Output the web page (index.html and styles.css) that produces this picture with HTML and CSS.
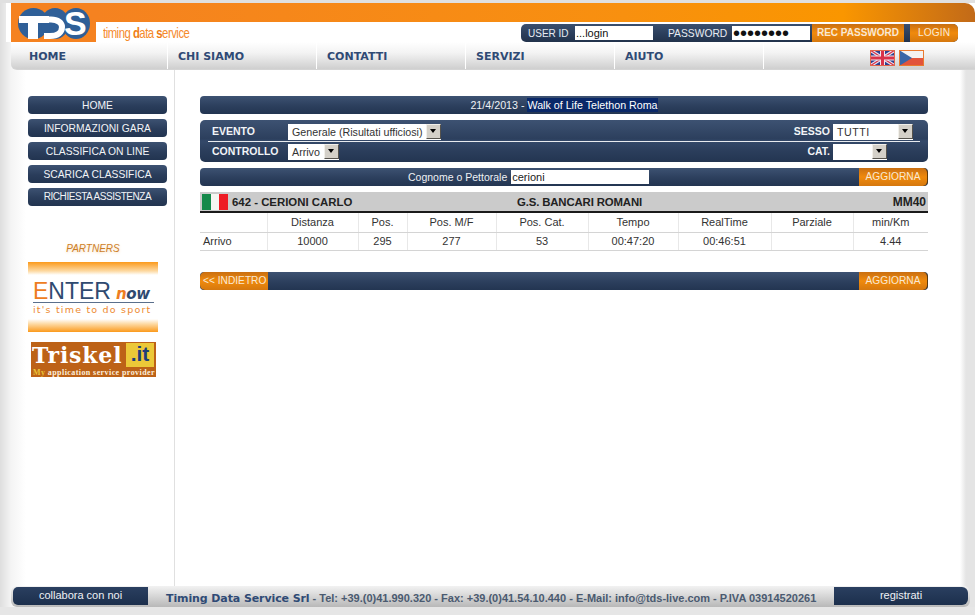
FILE: index.html
```html
<!DOCTYPE html>
<html lang="it">
<head>
<meta charset="utf-8">
<title>Timing Data Service</title>
<link rel="stylesheet" href="styles.css">
</head>
<body>
<div class="page">
  <header class="header">
    <div class="logo">
      <svg width="85" height="39" viewBox="0 0 85 39">
        <circle cx="22.500" cy="20.500" r="15.500" fill="#2f5f97"/>
        <ellipse cx="44" cy="20.500" rx="14" ry="15.500" fill="#2f5f97"/>
        <ellipse cx="65" cy="20.500" rx="14" ry="15.500" fill="#2f5f97"/>
        <rect x="8" y="13" width="30" height="7" fill="#fff"/>
        <rect x="17" y="13" width="10" height="23" fill="#fff"/>
        <path d="M31 16.500H40C47 16.500 51 20 51 24C51 29 47 33 39 33H33" fill="none" stroke="#fff" stroke-width="6"/>
        <text class="logo-s" x="53" y="32">S</text>
      </svg>
    </div>
    <div class="header-main">
      <div class="orange-bar"></div>
      <div class="header-row">
        <div class="tagline">timing <b>d</b>ata <b>s</b>ervice</div>
        <form class="login">
          <label class="login-label login-user">USER ID</label>
          <input class="login-input login-id" type="text" value="...login">
          <label class="login-label login-pass">PASSWORD</label>
          <input class="login-input login-pw" type="password" value="password">
          <span class="btn-orange btn-rec">REC PASSWORD</span>
          <span class="btn-orange btn-login">LOGIN</span>
        </form>
      </div>
    </div>
  </header>

  <nav class="nav">
    <a class="nav-item">HOME</a>
    <a class="nav-item">CHI SIAMO</a>
    <a class="nav-item">CONTATTI</a>
    <a class="nav-item">SERVIZI</a>
    <a class="nav-item">AIUTO</a>
    <div class="nav-flags">
      <svg class="flag" viewBox="0 0 25 16" width="25" height="16">
        <rect width="25" height="16" fill="#2c3f8f"/>
        <path d="M0 0L25 16M25 0L0 16" stroke="#e8e4f0" stroke-width="3.500"/>
        <path d="M0 0L25 16M25 0L0 16" stroke="#d8324a" stroke-width="1.200"/>
        <path d="M12.500 0V16M0 8H25" stroke="#f0e8ee" stroke-width="5"/>
        <path d="M12.500 0V16M0 8H25" stroke="#d8324a" stroke-width="3"/>
        <rect x=".5" y=".5" width="24" height="15" fill="none" stroke="#e0674c"/>
      </svg>
      <svg class="flag flag-cz" viewBox="0 0 25 16" width="25" height="16">
        <rect width="25" height="8" fill="#f4f2f2"/>
        <rect y="8" width="25" height="8" fill="#e2543c"/>
        <path d="M0 0L13 8L0 16z" fill="#3a66a8"/>
        <rect x=".5" y=".5" width="24" height="15" fill="none" stroke="#ea7a30"/>
      </svg>
    </div>
  </nav>

  <div class="body">
    <aside class="sidebar">
      <ul class="side-menu">
        <li class="side-btn">HOME</li>
        <li class="side-btn">INFORMAZIONI GARA</li>
        <li class="side-btn">CLASSIFICA ON LINE</li>
        <li class="side-btn">SCARICA CLASSIFICA</li>
        <li class="side-btn side-btn-last">RICHIESTA ASSISTENZA</li>
      </ul>
      <div class="partners">PARTNERS</div>
      <div class="enter">
        <div class="enter-word"><span class="enter-e">E</span>NTER<span class="enter-now"><span class="enter-n">n</span>ow</span></div>
        <div class="enter-sub">it's time to do sport</div>
      </div>
      <div class="triskel">
        <div class="triskel-top"><span class="triskel-name">Triskel</span><span class="triskel-it">.it</span></div>
        <div class="triskel-sub"><span class="triskel-my">My</span> application service provider</div>
      </div>
    </aside>

    <main class="content">
      <div class="bar bar-title">21/4/2013 - <span class="selected">Walk of Life Telethon Roma</span></div>

      <div class="filters">
        <div class="filter-row filter-row-top">
          <span class="f-label f-evento">EVENTO</span>
          <span class="fake-select sel-evento"><span class="sel-text">Generale (Risultati ufficiosi)</span><span class="sel-arrow"></span></span>
          <span class="f-label f-right">SESSO</span>
          <span class="fake-select sel-sesso"><span class="sel-text sel-tutti">TUTTI</span><span class="sel-arrow"></span></span>
        </div>
        <div class="filter-row">
          <span class="f-label f-evento">CONTROLLO</span>
          <span class="fake-select sel-controllo"><span class="sel-text">Arrivo</span><span class="sel-arrow"></span></span>
          <span class="f-label f-right">CAT.</span>
          <span class="fake-select sel-cat"><span class="sel-text"></span><span class="sel-arrow"></span></span>
        </div>
      </div>

      <div class="bar bar-search">
        <div class="search-center">
          <label class="search-label">Cognome o Pettorale</label>
          <input class="search-input" type="text" value="cerioni">
        </div>
        <span class="btn-orange btn-update">AGGIORNA</span>
      </div>

      <div class="runner">
        <svg class="it-flag" viewBox="0 0 26 16" width="26" height="16">
          <rect width="9" height="16" fill="#14894a"/>
          <rect x="9" width="8" height="16" fill="#f6f6f2"/>
          <rect x="17" width="9" height="16" fill="#ee1c25"/>
        </svg>
        <span class="runner-name">642 - CERIONI CARLO</span>
        <span class="runner-team">G.S. BANCARI ROMANI</span>
        <span class="runner-cat">MM40</span>
      </div>

      <table class="results">
        <colgroup>
          <col class="c1"><col class="c2"><col class="c3"><col class="c4"><col class="c5"><col class="c6"><col class="c7"><col class="c8"><col class="c9">
        </colgroup>
        <tr>
          <th></th><th>Distanza</th><th>Pos.</th><th>Pos. M/F</th><th>Pos. Cat.</th><th>Tempo</th><th>RealTime</th><th>Parziale</th><th>min/Km</th>
        </tr>
        <tr>
          <td class="first">Arrivo</td><td>10000</td><td>295</td><td>277</td><td>53</td><td>00:47:20</td><td>00:46:51</td><td></td><td>4.44</td>
        </tr>
      </table>

      <div class="bar bar-bottom">
        <span class="btn-orange btn-back">&lt;&lt; INDIETRO</span>
        <span class="btn-orange btn-update">AGGIORNA</span>
      </div>
    </main>
  </div>

  <footer class="footer">
    <a class="foot-btn foot-left">collabora con noi</a>
    <div class="foot-text"><b>Timing Data Service Srl</b> - Tel: +39.(0)41.990.320 - Fax: +39.(0)41.54.10.440 - E-Mail: info@tds-live.com - P.IVA 03914520261</div>
    <a class="foot-btn foot-right">registrati</a>
  </footer>
</div>
</body>
</html>
```
FILE: styles.css
```css
* { box-sizing: border-box; }
html, body { margin: 0; padding: 0; }
body {
  width: 975px;
  height: 615px;
  overflow: hidden;
  font-family: "Liberation Sans", Arial, sans-serif;
  font-size: 11px;
  color: #222;
  background: #e6e6e6;
}
.page {
  width: 975px;
  height: 615px;
  display: flex;
  flex-direction: column;
  padding-top: 3px;
  background:
    linear-gradient(180deg, #e0e0e0 3px, transparent 3px, transparent 607px, #e6e6e6 607px),
    linear-gradient(90deg, #dedede 0, #f4f4f4 11px, #fff 26px, #fff 960px, #e4e4e4 966px, #e4e4e4 975px);
}

/* header */
.header {
  display: flex;
  height: 39px;
  margin-left: 11px;
  background: #fff;
  box-shadow: -5px 0 0 #fff;
}
.logo {
  width: 85px;
  height: 39px;
  background: #f58220;
  flex: none;
}
.logo svg { display: block; }
.logo-s {
  font-family: "Liberation Sans", Arial, sans-serif;
  font-weight: 700;
  font-size: 34px;
  fill: #fff;
}
.header-main { flex: 1; display: flex; flex-direction: column; min-width: 0; }
.orange-bar {
  height: 19px;
  background: linear-gradient(90deg, #f58220 0, #f8900f 60%, #fa9600 85%, #c26a18 100%);
  border-top-right-radius: 10px;
}
.header-row { flex: 1; display: flex; align-items: flex-start; }
.tagline {
  margin-left: 7px;
  padding-top: 2px;
  width: 418px;
  flex: none;
  font-size: 15px;
  line-height: 17px;
  letter-spacing: -.65px;
  color: #f58a2b;
  transform: scaleX(.755);
  transform-origin: left;
  white-space: nowrap;
}
.tagline b { color: #ef7d14; font-weight: 700; }
.login {
  margin: 2px 0 0 0;
  width: 437px;
  height: 18px;
  flex: none;
  display: flex;
  align-items: center;
  border-radius: 5px;
  overflow: hidden;
  background: linear-gradient(180deg, #3a4f6e, #2a3d5a 60%, #22324b);
  color: #e8ecf2;
}
.login-label { font-size: 10px; white-space: nowrap; }
.login-user { margin-left: 7px; width: 47px; }
.login-pass { margin-left: 15px; width: 64px; font-size: 10.300px; }
.login-input {
  border: 0;
  padding: 0 1px;
  height: 14px;
  background: #fff;
  font-family: "Liberation Sans", Arial, sans-serif;
  font-size: 11px;
  color: #111;
  outline: 0;
  border-radius: 0;
  width: 78px;
}
.login-pw { font-size: 20px; line-height: 14px; letter-spacing: 0; }
.btn-orange {
  display: block;
  height: 18px;
  line-height: 17px;
  text-align: center;
  color: #f8e8d4;
  font-size: 10.200px;
  white-space: nowrap;
  background: linear-gradient(180deg, #c96f12, #f08a0c 50%, #d5780f);
}
.btn-rec { width: 92px; margin-left: 2px; font-weight: 700; font-size: 10px; }
.btn-login { width: 48px; margin-left: 6px; letter-spacing: .1px; }

/* nav */
.nav {
  height: 28px;
  margin-left: 11px;
  flex: none;
  display: flex;
  background: linear-gradient(180deg, #fff 0, #f3f3f3 40%, #cfcfcf 100%);
  border-bottom-left-radius: 6px;
  border-bottom: 1px solid #d4d4d4;
}
.nav-item {
  width: 149px;
  height: 27px;
  padding-left: 10px;
  line-height: 29px;
  font-family: "DejaVu Sans", Verdana, sans-serif;
  font-size: 11px;
  font-weight: 700;
  color: #2f4a75;
  border-right: 1px solid #fff;
}
.nav-item:first-child { width: 157px; padding-left: 18px; }
.nav-flags {
  display: flex;
  gap: 4px;
  margin-left: 106px;
  padding-top: 8px;
}
.flag { display: block; }

/* body */
.body { flex: 1; display: flex; min-height: 0; }
.sidebar {
  width: 164px;
  margin-left: 11px;
  padding: 26px 0 0 17px;
  border-right: 1px solid #e0e0e0;
  flex: none;
}
.side-menu { list-style: none; margin: 0; padding: 0; width: 139px; }
.side-btn {
  height: 18px;
  margin-bottom: 5px;
  line-height: 19px;
  text-align: center;
  font-size: 10.300px;
  color: #f2f4f7;
  border-radius: 4px;
  background: linear-gradient(180deg, #3d5272, #2a3d5b 55%, #223450);
  white-space: nowrap;
  overflow: hidden;
}
.side-btn-last { font-size: 10px; letter-spacing: -.45px; line-height: 18px; }
.partners {
  margin-top: 36px;
  width: 130px;
  text-align: center;
  font-style: italic;
  font-size: 10px;
  line-height: 14px;
  color: #cd7f28;
  text-shadow: 0 1px 3px #f6d9b4;
}
.enter {
  margin-top: 6px;
  width: 130px;
  height: 70px;
  background: linear-gradient(180deg, #fb9a1c 0, #fdd9a2 9px, #fff 13px, #fff 57px, #fdd9a2 62px, #fb9a1c 70px);
  padding-top: 17px;
  overflow: hidden;
}
.enter-word {
  height: 24px;
  margin-left: 5px;
  margin-right: 4px;
  font-size: 23px;
  line-height: 24px;
  color: #2f4a70;
  border-bottom: 1px solid #5a6f8c;
  white-space: nowrap;
}
.enter-e { color: #ee7d22; }
.enter-now {
  font-family: "DejaVu Sans", sans-serif;
  font-style: italic;
  font-weight: 700;
  font-size: 15px;
  margin-left: 5px;
  letter-spacing: -.3px;
}
.enter-n { color: #ee7d22; }
.enter-sub {
  padding-left: 5px;
  font-family: "DejaVu Sans", sans-serif;
  font-size: 9.500px;
  line-height: 13px;
  letter-spacing: 1.200px;
  color: #ee8a30;
  white-space: nowrap;
}
.triskel {
  margin: 10px 0 0 3px;
  width: 125px;
  height: 35px;
  background: #bd6217;
  padding: 1px 2px 0 1px;
}
.triskel-top { display: flex; justify-content: space-between; height: 24px; }
.triskel-name {
  font-family: "DejaVu Serif", serif;
  font-weight: 700;
  font-size: 22px;
  line-height: 24px;
  letter-spacing: .8px;
  color: #fff;
}
.triskel-it {
  width: 28px;
  height: 24px;
  background: #ecc838;
  color: #1f3f7a;
  font-weight: 700;
  font-size: 21px;
  line-height: 22px;
  text-align: center;
}
.triskel-sub {
  margin-top: 1px;
  padding-left: 1px;
  font-family: "Liberation Serif", serif;
  font-size: 8px;
  font-weight: 700;
  line-height: 9px;
  letter-spacing: .42px;
  color: #fbeedd;
  white-space: nowrap;
}
.triskel-my { color: #eac537; }

/* content */
.content {
  flex: 1;
  min-width: 0;
  padding: 26px 47px 0 25px;
}
.bar {
  height: 18px;
  border-radius: 4px;
  color: #eef1f5;
  background: linear-gradient(180deg, #3d5272, #2c3f5d 55%, #233551);
}
.bar-title { line-height: 18px; text-align: center; font-size: 10.700px; }
.selected { background: #0a2868; color: #fff; padding: 1px 0; }
.filters {
  margin-top: 6px;
  height: 42px;
  padding: 3px 8px 0;
  border-radius: 5px;
  background: linear-gradient(180deg, #3d5272, #2c3f5d 45%, #34496a 50%, #2c3f5d 70%, #233551);
  color: #f2f4f7;
}
.filter-row { display: flex; align-items: center; height: 19px; }
.filter-row-top { border-bottom: 1px solid #e8ebef; padding-bottom: 1px; }
.f-label { font-size: 10.500px; font-weight: 700; white-space: nowrap; padding-bottom: 2px; }
.f-evento { width: 80px; padding-left: 4px; }
.f-right { margin-left: auto; margin-right: 3px; }
.fake-select {
  display: flex;
  height: 16px;
  background: #fff;
  color: #333;
  font-size: 10.700px;
  line-height: 16px;
  flex: none;
}
.sel-text { flex: 1; padding-left: 4px; white-space: nowrap; overflow: hidden; }
.sel-tutti { letter-spacing: .5px; }
.sel-arrow {
  position: relative;
  width: 15px;
  height: 15px;
  background: #d4d0c8;
  border: 1px solid;
  border-color: #f2f0ea #55524c #55524c #f2f0ea;
  flex: none;
}
.sel-arrow::after {
  content: "";
  position: absolute;
  left: 3px;
  top: 4px;
  border-style: solid;
  border-width: 4px 3.500px 0;
  border-color: #000 transparent transparent;
}
.sel-evento { width: 153px; }
.sel-controllo { width: 51px; }
.sel-sesso { width: 80px; margin-right: 7px; }
.sel-cat { width: 54px; margin-right: 33px; }
.bar-search {
  margin-top: 6px;
  position: relative;
  display: flex;
  justify-content: flex-end;
}
.search-center {
  position: absolute;
  left: 208px;
  top: 2px;
  display: flex;
  align-items: center;
  height: 14px;
}
.search-label { font-size: 10.500px; margin-right: 4px; white-space: nowrap; }
.search-input {
  width: 138px;
  height: 14px;
  border: 0;
  padding: 0 1px;
  border-radius: 0;
  font-family: "Liberation Sans", Arial, sans-serif;
  font-size: 11px;
  color: #222;
  background: #fff;
}
.btn-update { width: 69px; border-radius: 0 5px 5px 0; border-right: 1px solid #5a3a10; }
.runner {
  margin-top: 6px;
  height: 21px;
  padding: 2px 2px 0;
  display: flex;
  align-items: flex-start;
  background: #cbcbcb;
  border-bottom: 2px solid #1a1a1a;
  font-weight: 700;
  font-size: 11.400px;
  line-height: 16px;
  color: #222;
}
.it-flag { display: block; flex: none; }
.runner-name { margin-left: 4px; width: 285px; }
.runner-team { width: 259px; letter-spacing: -.15px; }
.runner-cat { margin-left: auto; font-size: 12px; }
.results {
  width: 728px;
  table-layout: fixed;
  border-collapse: collapse;
  margin: 0;
  font-size: 11px;
  color: #333;
}
.c1 { width: 67px; }
.c2 { width: 91px; }
.c3 { width: 49px; }
.c4 { width: 89px; }
.c5 { width: 92px; }
.c6 { width: 90px; }
.c7 { width: 93px; }
.c8 { width: 82px; }
.c9 { width: 75px; }
.results th, .results td {
  height: 19px;
  padding: 0;
  text-align: center;
  font-weight: 400;
  border-bottom: 1px solid #d4d4d4;
  border-left: 1px solid #e8e8e8;
  line-height: 14px;
}
.results td { height: 18px; }
.results th:first-child, .results td:first-child { border-left: 0; }
.results td.first { text-align: left; padding-left: 3px; }
.bar-bottom {
  margin-top: 21px;
  display: flex;
  justify-content: space-between;
}
.btn-back { width: 68px; border-radius: 5px 0 0 5px; font-size: 10.200px; text-align: left; padding-left: 3px; }

/* footer */
.footer {
  flex: none;
  height: 21px;
  margin: 0 5px 8px 11px;
  display: flex;
  align-items: stretch;
  padding: 1px 2px 0;
  border-radius: 6px;
  background: linear-gradient(180deg, #f2f2f2, #dedede 35%, #b8b8b8 100%);
}
.foot-btn {
  width: 135px;
  flex: none;
  height: 18px;
  line-height: 17px;
  text-align: center;
  font-size: 11px;
  color: #eef1f5;
  background: linear-gradient(180deg, #2a3f60, #1c2f4c);
}
.foot-left { border-radius: 5px 0 0 5px; }
.foot-right { border-radius: 0 6px 6px 0; width: 134px; margin-left: auto; }
.foot-text {
  padding: 4px 0 0 18px;
  font-size: 11px;
  line-height: 14px;
  color: #4a5a70;
  white-space: nowrap;
  font-weight: 700;
  min-width: 0;
}
.foot-text b {
  font-family: "DejaVu Sans", Verdana, sans-serif;
  font-size: 11px;
  letter-spacing: -.1px;
  color: #2f4a75;
}
```
